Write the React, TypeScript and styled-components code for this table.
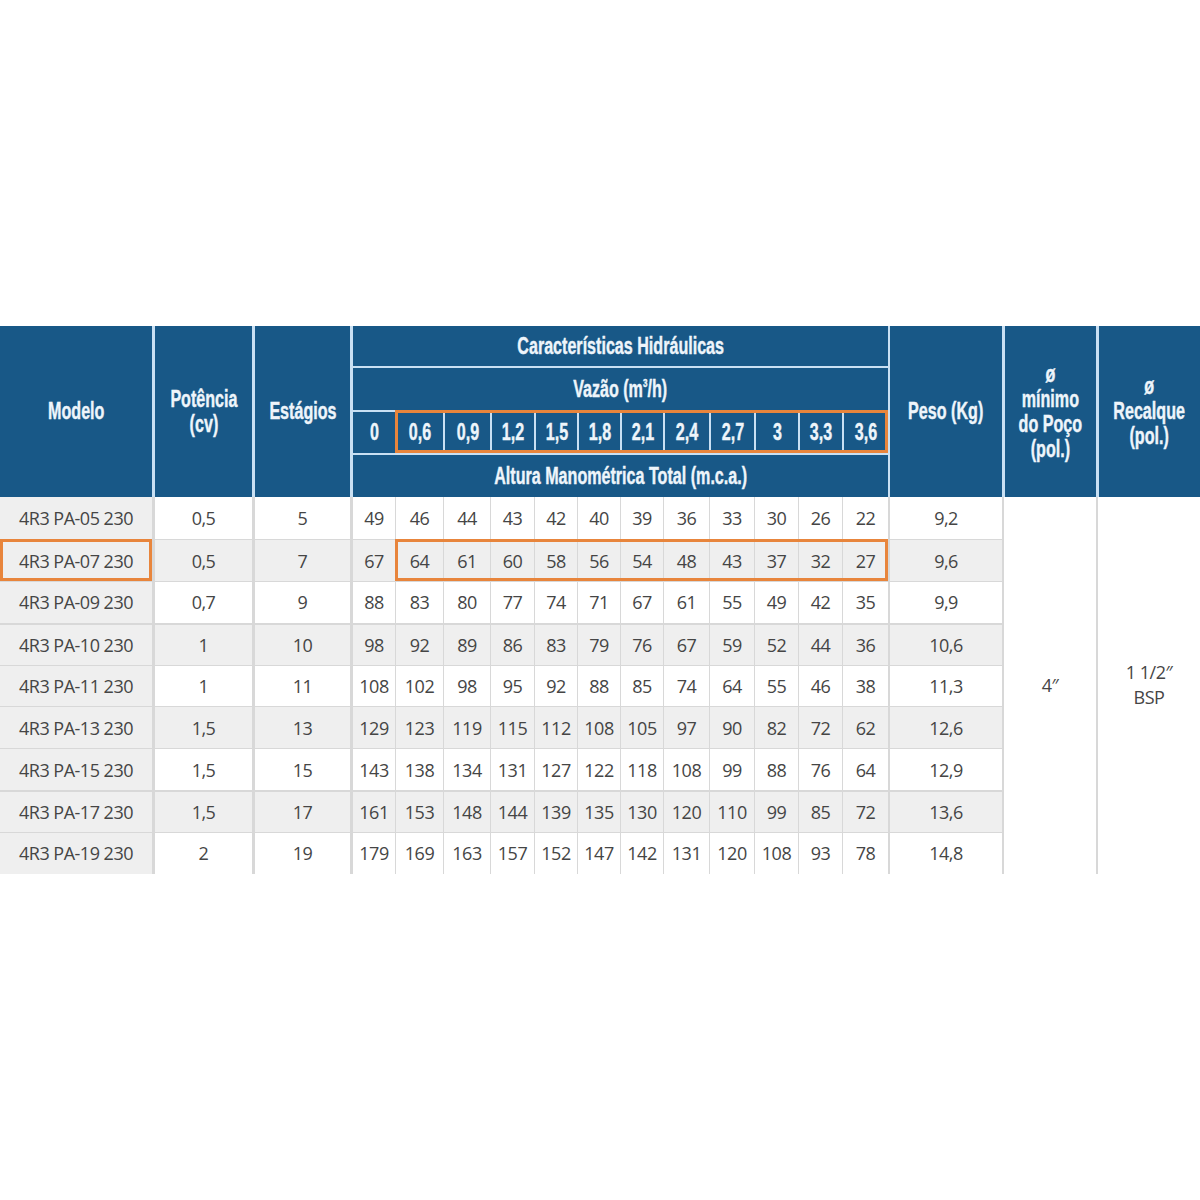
import styled, { createGlobalStyle } from "styled-components";

const GlobalStyle = createGlobalStyle`
  html, body {
    margin: 0;
    padding: 0;
    background: #ffffff;
  }
`;

const BLUE = "#185887";
const HEAD_LINE = "#c9e0f3";
const HEAD_TEXT = "#eef5fb";
const ORANGE = "#e8853c";
const GRAY_BG = "#efefef";
const DATA_LINE = "#d8d8d8";

const COLUMNS = [152, 100, 98, 45, 48, 47, 44, 43, 43, 43, 46, 45, 44, 44, 46, 114, 94, 104];

const Page = styled.div`
  min-height: 1200px;
  display: flex;
  align-items: center;
`;

const Grid = styled.div`
  display: grid;
  width: 1200px;
  grid-template-columns: ${COLUMNS.map((c) => `${c}px`).join(" ")};
  grid-template-rows: 40px 44px 43px 44px repeat(9, 41.8px);
`;

type Place = {
  $col: number;
  $row: number;
  $colSpan?: number;
  $rowSpan?: number;
  $left?: number;
  $top?: number;
};

const HeadCell = styled.div<Place>`
  grid-column: ${(p) => p.$col} / span ${(p) => p.$colSpan ?? 1};
  grid-row: ${(p) => p.$row} / span ${(p) => p.$rowSpan ?? 1};
  background: ${BLUE};
  border-left: ${(p) => p.$left ?? 0}px solid ${HEAD_LINE};
  border-top: ${(p) => p.$top ?? 0}px solid ${HEAD_LINE};
  box-sizing: border-box;
  display: flex;
  align-items: center;
  justify-content: center;
  text-align: center;
  color: ${HEAD_TEXT};
  font-family: "Liberation Sans", Arial, sans-serif;
  font-weight: 700;
  font-size: 23px;
  line-height: 25px;
  -webkit-text-stroke: 0.4px ${HEAD_TEXT};
`;

// the source uses a tall condensed face; squeeze a regular bold one
const Label = styled.span<{ $squeeze?: number }>`
  display: inline-block;
  white-space: nowrap;
  transform: scaleX(${(p) => p.$squeeze ?? 0.7});
`;

const DataCell = styled.div<Place & { $gray?: boolean; $lh?: number }>`
  grid-column: ${(p) => p.$col} / span ${(p) => p.$colSpan ?? 1};
  grid-row: ${(p) => p.$row} / span ${(p) => p.$rowSpan ?? 1};
  background: ${(p) => (p.$gray ? GRAY_BG : "#ffffff")};
  border-left: ${(p) => p.$left ?? 0}px solid ${DATA_LINE};
  border-top: ${(p) => p.$top ?? 0}px solid ${DATA_LINE};
  box-sizing: border-box;
  display: flex;
  align-items: center;
  justify-content: center;
  text-align: center;
  color: #454545;
  font-family: "Open Sans", "Liberation Sans", sans-serif;
  font-size: 18px;
  line-height: ${(p) => p.$lh ?? 22}px;
  letter-spacing: -0.5px;
  white-space: nowrap;
`;

const Highlight = styled.div<Place>`
  grid-column: ${(p) => p.$col} / span ${(p) => p.$colSpan ?? 1};
  grid-row: ${(p) => p.$row} / span ${(p) => p.$rowSpan ?? 1};
  border: 3px solid ${ORANGE};
  box-sizing: border-box;
  pointer-events: none;
  z-index: 2;
`;

const Sup = styled.sup`
  font-size: 0.5em;
  line-height: 0;
  vertical-align: 0.9em;
`;

const flows = ["0", "0,6", "0,9", "1,2", "1,5", "1,8", "2,1", "2,4", "2,7", "3", "3,3", "3,6"];

type Row = {
  model: string;
  power: string;
  stages: string;
  heads: number[];
  weight: string;
};

const rows: Row[] = [
  { model: "4R3 PA-05 230", power: "0,5", stages: "5", heads: [49, 46, 44, 43, 42, 40, 39, 36, 33, 30, 26, 22], weight: "9,2" },
  { model: "4R3 PA-07 230", power: "0,5", stages: "7", heads: [67, 64, 61, 60, 58, 56, 54, 48, 43, 37, 32, 27], weight: "9,6" },
  { model: "4R3 PA-09 230", power: "0,7", stages: "9", heads: [88, 83, 80, 77, 74, 71, 67, 61, 55, 49, 42, 35], weight: "9,9" },
  { model: "4R3 PA-10 230", power: "1", stages: "10", heads: [98, 92, 89, 86, 83, 79, 76, 67, 59, 52, 44, 36], weight: "10,6" },
  { model: "4R3 PA-11 230", power: "1", stages: "11", heads: [108, 102, 98, 95, 92, 88, 85, 74, 64, 55, 46, 38], weight: "11,3" },
  { model: "4R3 PA-13 230", power: "1,5", stages: "13", heads: [129, 123, 119, 115, 112, 108, 105, 97, 90, 82, 72, 62], weight: "12,6" },
  { model: "4R3 PA-15 230", power: "1,5", stages: "15", heads: [143, 138, 134, 131, 127, 122, 118, 108, 99, 88, 76, 64], weight: "12,9" },
  { model: "4R3 PA-17 230", power: "1,5", stages: "17", heads: [161, 153, 148, 144, 139, 135, 130, 120, 110, 99, 85, 72], weight: "13,6" },
  { model: "4R3 PA-19 230", power: "2", stages: "19", heads: [179, 169, 163, 157, 152, 147, 142, 131, 120, 108, 93, 78], weight: "14,8" },
];

const App = () => {
  return (
    <Page>
      <GlobalStyle />
      <Grid>
        <HeadCell $col={1} $row={1} $rowSpan={4}>
          <Label>Modelo</Label>
        </HeadCell>
        <HeadCell $col={2} $row={1} $rowSpan={4} $left={3}>
          <Label>
            Potência
            <br />
            (cv)
          </Label>
        </HeadCell>
        <HeadCell $col={3} $row={1} $rowSpan={4} $left={3}>
          <Label>Estágios</Label>
        </HeadCell>
        <HeadCell $col={4} $row={1} $colSpan={12} $left={3}>
          <Label>Características Hidráulicas</Label>
        </HeadCell>
        <HeadCell $col={4} $row={2} $colSpan={12} $left={3} $top={2}>
          <Label>
            Vazão (m<Sup>3</Sup>/h)
          </Label>
        </HeadCell>
        {flows.map((f, i) => (
          <HeadCell key={f} $col={4 + i} $row={3} $left={i === 0 ? 3 : 2} $top={2}>
            <Label>{f}</Label>
          </HeadCell>
        ))}
        <HeadCell $col={4} $row={4} $colSpan={12} $left={3} $top={2}>
          <Label>Altura Manométrica Total (m.c.a.)</Label>
        </HeadCell>
        <HeadCell $col={16} $row={1} $rowSpan={4} $left={2}>
          <Label>Peso (Kg)</Label>
        </HeadCell>
        <HeadCell $col={17} $row={1} $rowSpan={4} $left={3}>
          <Label>
            ø
            <br />
            mínimo
            <br />
            do Poço
            <br />
            (pol.)
          </Label>
        </HeadCell>
        <HeadCell $col={18} $row={1} $rowSpan={4} $left={3}>
          <Label>
            ø
            <br />
            Recalque
            <br />
            (pol.)
          </Label>
        </HeadCell>

        {rows.map((r, ri) => {
          const row = 5 + ri;
          const gray = ri % 2 === 1;
          const top = ri === 0 ? 0 : ri === 3 || ri === 7 ? 2 : 1;
          return [
            <DataCell key={`m${ri}`} $col={1} $row={row} $top={top} $gray>
              {r.model}
            </DataCell>,
            <DataCell key={`p${ri}`} $col={2} $row={row} $top={top} $left={3} $gray={gray}>
              {r.power}
            </DataCell>,
            <DataCell key={`s${ri}`} $col={3} $row={row} $top={top} $left={3} $gray={gray}>
              {r.stages}
            </DataCell>,
            ...r.heads.map((h, hi) => (
              <DataCell
                key={`h${ri}-${hi}`}
                $col={4 + hi}
                $row={row}
                $top={top}
                $left={hi === 0 ? 3 : 1}
                $gray={gray}
              >
                {h}
              </DataCell>
            )),
            <DataCell key={`w${ri}`} $col={16} $row={row} $top={top} $left={2} $gray={gray}>
              {r.weight}
            </DataCell>,
          ];
        })}
        <DataCell $col={17} $row={5} $rowSpan={9} $left={2}>
          4″
        </DataCell>
        <DataCell $col={18} $row={5} $rowSpan={9} $left={2} $lh={25}>
          1 1/2″
          <br />
          BSP
        </DataCell>

        <Highlight $col={5} $row={3} $colSpan={11} />
        <Highlight $col={1} $row={6} />
        <Highlight $col={5} $row={6} $colSpan={11} />
      </Grid>
    </Page>
  );
};

export default App;
